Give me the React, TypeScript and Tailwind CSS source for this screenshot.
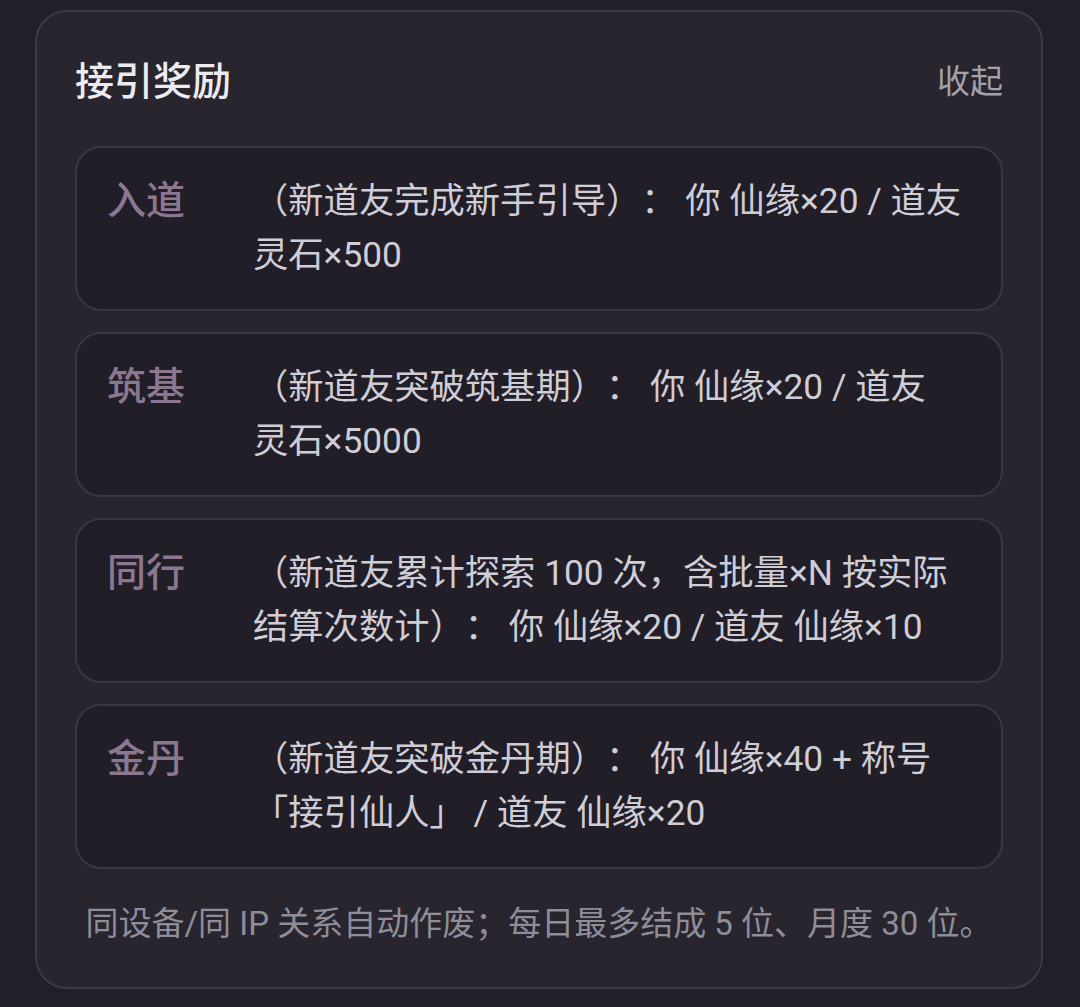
import React from "react";

const rows = [
  { label: "入道", text: "（新道友完成新手引导）： 你 仙缘×20 / 道友 灵石×500" },
  { label: "筑基", text: "（新道友突破筑基期）： 你 仙缘×20 / 道友 灵石×5000" },
  { label: "同行", text: "（新道友累计探索 100 次，含批量×N 按实际结算次数计）： 你 仙缘×20 / 道友 仙缘×10" },
  { label: "金丹", text: "（新道友突破金丹期）： 你 仙缘×40 + 称号「接引仙人」 / 道友 仙缘×20" },
];

export default function App() {
  return (
    <div
      className="min-h-[1007px] w-[1080px] bg-[#221f29] pl-[35px] pr-[37px] pt-[10px] [text-spacing-trim:space-all]"
      style={{ fontFamily: "Roboto, 'Noto Sans CJK SC', sans-serif" }}
    >
      <div className="rounded-[32px] border-2 border-[#3d3a45] bg-[#28252f] px-[38px] pt-[38px] pb-[39px]">
        <div className="flex items-center justify-between">
          <div className="text-[39px] leading-[64px] font-medium text-[#ecebf0]">接引奖励</div>
          <div className="text-[33px] leading-[64px] text-[#a3a1ab]">收起</div>
        </div>
        <div className="mt-[32px] flex flex-col gap-[21px]">
          {rows.map((r) => (
            <div
              key={r.label}
              className="flex h-[165px] rounded-[26px] border-2 border-[#3a3743] bg-[#211e28] pl-[30px] pr-[34px] pt-[26px]"
            >
              <div className="w-[146px] shrink-0 text-[39px] leading-[54px] font-medium text-[#8b7890]">
                {r.label}
              </div>
              <div className="w-[716px] text-[35.3px] leading-[54px] text-[#cfcdd6]">{r.text}</div>
            </div>
          ))}
        </div>
        <div className="mt-[31px] text-center text-[33px] leading-[48px] text-[#8f8d97]">
          同设备/同 IP 关系自动作废；每日最多结成 5 位、月度 30 位。
        </div>
      </div>
    </div>
  );
}
